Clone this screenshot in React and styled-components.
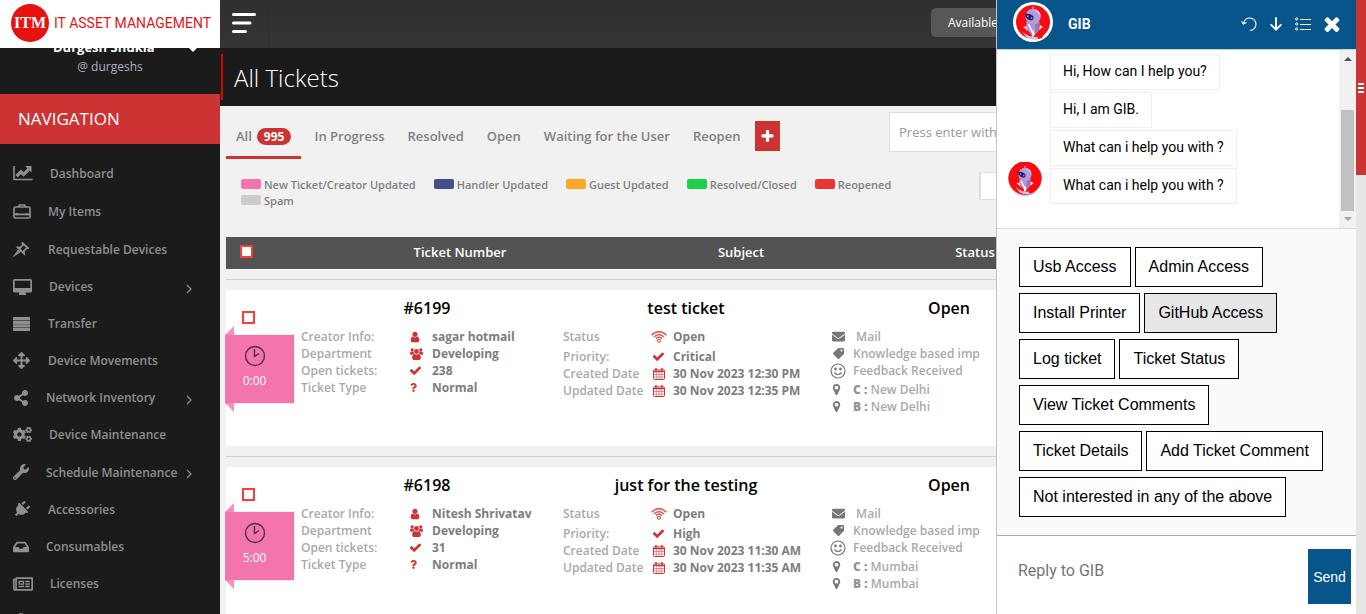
import React from 'react';
import styled, { createGlobalStyle, css } from 'styled-components';
import {
  FaArrowsAlt, FaShareAlt, FaCogs, FaWrench, FaPlug, FaInbox, FaRegNewspaper, FaUser,
  FaQuestion, FaEnvelope, FaTag,
} from 'react-icons/fa';

const Global = createGlobalStyle`
  *, *::before, *::after { box-sizing: border-box; }
  body { margin: 0; overflow: hidden; background: #f1f1f1; font-family: "Open Sans", sans-serif; font-size: 13px; }
  button, input { font: inherit; border-radius: 0; }
`;

/* ---------- icons ---------- */

const Glyph = ({ d, size = 14, box = '0 0 1792 1792' }) => (
  <svg width={size} height={size} viewBox={box} fill="currentColor" aria-hidden="true"><path d={d} /></svg>
);
const PERSON = 'M1536 1399q0 109-62.5 187t-150.5 78h-854q-88 0-150.5-78t-62.5-187q0-85 8.5-160.5t31.5-152 58.5-131 94-89 134.5-34.5q131 128 313 128t313-128q76 0 134.5 34.5t94 89 58.5 131 31.5 152 8.5 160.5zm-256-887q0 159-112.5 271.5t-271.5 112.5-271.5-112.5-112.5-271.5 112.5-271.5 271.5-112.5 271.5 112.5 112.5 271.5z';
const CHECK = 'M1671 566q0 40-28 68l-724 724-136 136q-28 28-68 28t-68-28l-136-136-362-362q-28-28-28-68t28-68l136-136q28-28 68-28t68 28l294 295 656-657q28-28 68-28t68 28l136 136q28 28 28 68z';
const MARKER = 'M1152 640q0-106-75-181t-181-75-181 75-75 181 75 181 181 75 181-75 75-181zm256 0q0 109-33 179l-364 774q-16 33-47.5 52t-67.5 19-67.5-19-46.5-52l-365-774q-33-70-33-179 0-212 150-362t362-150 362 150 150 362z';
const PLUS = 'M1600 736v192q0 40-28 68t-68 28h-416v416q0 40-28 68t-68 28h-192q-40 0-68-28t-28-68v-416h-416q-40 0-68-28t-28-68v-192q0-40 28-68t68-28h416v-416q0-40 28-68t68-28h192q40 0 68 28t28 68v416h416q40 0 68 28t28 68z';
const TIMES = 'M1490 1322q0 40-28 68l-136 136q-28 28-68 28t-68-28l-294-294-294 294q-28 28-68 28t-68-28l-136-136q-28-28-28-68t28-68l294-294-294-294q-28-28-28-68t28-68l136-136q28-28 68-28t68 28l294 294 294-294q28-28 68-28t68 28l136 136q28 28 28 68t-28 68l-294 294 294 294q28 28 28 68z';

const ChartIcon = () => (
  <svg width="20" height="16" viewBox="0 0 20 16" fill="none" stroke="currentColor" aria-hidden="true">
    <path d="M1 1v13.500h18.500" strokeWidth="1.600" />
    <path d="M3.600 11.200 8 6.800l2.700 2.700 5.300-5.300" strokeWidth="3.200" />
    <path d="M12 1h6.500v6.500z" fill="currentColor" stroke="none" />
  </svg>
);
const CaseIcon = () => (
  <svg width="18" height="15" viewBox="0 0 18 15" fill="none" stroke="currentColor" strokeWidth="1.700" aria-hidden="true">
    <rect x="1" y="3" width="16" height="11" rx="1.500" /><path d="M5.500 3 6.300 1h5.400l.8 2M1 10.300h16M4.200 9v2.600M13.800 9v2.600" />
  </svg>
);
const PinIcon = () => (
  <svg width="16" height="15" viewBox="0 0 16 15" aria-hidden="true">
    <path d="M.6 14.400 5.400 7.900l1.900 1.900z" fill="currentColor" stroke="currentColor" />
    <path d="M9.600 1.300 15 6l-1.700.5-2.400 2.600.2 2.500-6.400-6.100 2.800.1 2.300-2.600z" fill="none" stroke="currentColor" strokeWidth="1.800" />
  </svg>
);
const DesktopIcon = () => (
  <svg width="19" height="16" viewBox="0 0 19 16" fill="currentColor" aria-hidden="true">
    <path fillRule="evenodd" d="M1.600 0h15.800Q19 0 19 1.600V12q0 1.600-1.600 1.600H12.500l.5 1.500v.9H6v-.9l.5-1.500H1.600Q0 13.600 0 12V1.600Q0 0 1.600 0zM1.700 1.700v7.300h15.600V1.700z" />
  </svg>
);
const RowsIcon = () => (
  <svg width="17" height="14" viewBox="0 0 17 14" fill="currentColor" aria-hidden="true">
    <rect width="17" height="3.200" rx=".5" /><rect y="3.700" width="17" height="3.200" rx=".5" /><rect y="7.300" width="17" height="3.200" rx=".5" /><rect y="10.900" width="17" height="3.100" rx=".5" />
  </svg>
);
const GroupIcon = () => (
  <svg width="13" height="12" viewBox="0 0 13 12" fill="currentColor" aria-hidden="true">
    <circle cx="2.200" cy="1.800" r="1.600" /><circle cx="10.800" cy="1.800" r="1.600" /><circle cx="6.500" cy="3.500" r="2.400" />
    <path d="M0 5.500Q0 3.600 1.300 3.600h2.200q0 1.400 1 2.200-1.700 0-2.300 1H1Q0 6.800 0 5.500zM13 5.500q0-1.900-1.300-1.900H9.500q0 1.400-1 2.200 1.700 0 2.300 1H12q1 0 1-1.300z" />
    <path d="M2.200 10q0-3.800 2.300-3.900 2 1.400 4 0 2.300.1 2.300 3.900 0 2-1.600 2H3.800q-1.600 0-1.600-2z" />
  </svg>
);
const WifiIcon = () => (
  <svg width="16" height="13" viewBox="0 0 16 13" fill="none" stroke="currentColor" aria-hidden="true" opacity=".75">
    <path d="M.6 5.200Q8-1.800 15.400 5.200M3 7Q8 2.200 13 7M5 8.600Q8 5.800 11 8.600" strokeWidth="1.700" />
    <circle cx="8" cy="10.800" r="1.500" strokeWidth="1.200" />
  </svg>
);
const CalendarIcon = () => (
  <svg width="12" height="12" viewBox="0 0 12 12" fill="none" stroke="currentColor" aria-hidden="true">
    <rect x=".5" y="1.900" width="11" height="9.600" rx="1" />
    <path d="M.5 3.500h11" strokeWidth="1.400" /><path d="M3 0v2.500M9 0v2.500" strokeWidth="1.500" />
    <path d="M3.300 4v7M6 4v7M8.700 4v7M.5 6.500h11M.5 9h11" strokeWidth=".5" />
  </svg>
);
const SmileIcon = () => (
  <svg width="16" height="16" viewBox="0 0 16 16" fill="none" stroke="currentColor" strokeWidth="1.200" aria-hidden="true">
    <circle cx="8" cy="8" r="7" /><path d="M4.300 9.500q3.700 4 7.400 0" />
    <circle cx="5.500" cy="6" r=".8" fill="currentColor" /><circle cx="10.500" cy="6" r=".8" fill="currentColor" />
  </svg>
);
const ClockIcon = () => (
  <svg width="22" height="22" viewBox="0 0 22 22" fill="none" stroke="#4b3440" strokeWidth="1.400" aria-hidden="true">
    <circle cx="11" cy="11" r="9.500" /><path d="M10.500 4v7.500L15 8.500" />
  </svg>
);
const ChevronIcon = () => (
  <svg width="6" height="10" viewBox="0 0 6 10" fill="none" stroke="currentColor" strokeWidth="1.200" aria-hidden="true"><path d="m1 1 4 4-4 4" /></svg>
);
const MenuIcon = () => (
  <svg width="24" height="20" viewBox="0 0 24 20" stroke="#fff" strokeWidth="3" strokeLinecap="round" aria-hidden="true">
    <path d="M1.500 1.500h21M1.500 10h16.500M1.500 18.500h12" />
  </svg>
);
const UndoIcon = () => (
  <svg width="16" height="15" viewBox="0 0 16 15" fill="none" stroke="currentColor" strokeWidth="1.100" aria-hidden="true">
    <path d="M2.500 6.500C3.300 3 5.700 1 8.800 1c3.500 0 6.200 2.800 6.200 6.300s-2.700 6.200-6.200 6.200M.5 4.300l2 2.700 3-1.600" />
  </svg>
);
const DownIcon = () => (
  <svg width="12" height="14" viewBox="0 0 12 14" fill="none" stroke="currentColor" strokeWidth="1.900" strokeLinecap="round" aria-hidden="true">
    <path d="M6 1v11.500M1.200 7.800 6 12.600l4.800-4.800" />
  </svg>
);
const ListIcon = () => (
  <svg width="16" height="14" viewBox="0 0 16 14" fill="none" stroke="currentColor" aria-hidden="true">
    <circle cx="1.700" cy="2" r="1.100" /><circle cx="1.700" cy="7" r="1.100" /><circle cx="1.700" cy="12" r="1.100" />
    <path d="M5 2.500h11M5 7.500h11M5 12.500h11" />
  </svg>
);
const Robot = ({ size, ring }) => (
  <svg width={size} height={size} viewBox="0 0 40 40" role="img" aria-label="GIB">
    <circle cx="20" cy="20" r="20" fill={ring ? '#fff' : '#c9c9cf'} />
    <circle cx="20" cy={ring ? 20 : 19} r={ring ? 17 : 19.5} fill="#fb0a0e" />
    <path d="M9 30q11 8 21 3l-3 4q-7 2-13-1z" fill="#cfc6cf" />
    <path d="M24 33l7-2-2 5-4 1z" fill="#fb0a0e" />
    <path d="M20 4.500v5" stroke="#a8a0c8" strokeWidth="1.400" />
    <path d="M14 24l-4 1 5 4zM27 23l3 2-4 3z" fill="#e8e2f0" />
    <path d="M13.500 19.500h13v7.500q-3 5-6 6-5-2-7-7z" fill="#ab95d2" />
    <path d="M15.500 22q2 5 4.500 9" stroke="#efe8fa" strokeWidth="2" fill="none" />
    <path d="M22 22q4 0 4-2v7l-4 4z" fill="#8f79bb" />
    <circle cx="20" cy="14.500" r="7.800" fill="#b79ad9" />
    <path d="M20 8q7-1 7.500 6-3-5-7.500-6z" fill="#e2d2f4" />
    <path d="M12.300 11.500q4.500-.5 8 2.500 1 4-2 4.500-4-.5-6-4z" fill="#231a66" />
    <circle cx="14.800" cy="14.300" r="1" fill="#4aa8ff" /><circle cx="18.500" cy="16" r="1" fill="#4aa8ff" />
    <path d="M20 28l1.800 4.500-1.800 3-1.500-3z" fill="#fff" />
  </svg>
);

/* ---------- layout ---------- */

const Page = styled.div`
  display: grid;
  grid-template-columns: 220px 1fr 10px;
  height: 100vh;
  overflow: hidden;
`;

/* ---------- sidebar ---------- */

const Sidebar = styled.aside`
  background: #1b1b1b;
  overflow: hidden;
`;
const Logo = styled.a`
  display: flex;
  align-items: center;
  gap: 5px;
  height: 48px;
  padding: 0 0 2px 11px;
  background: #fff;
  color: #e31519;
  text-decoration: none;
  white-space: nowrap;
  font: 14px Roboto, sans-serif;
`;
const LogoMark = styled.span`
  flex: none;
  display: grid;
  place-items: center;
  width: 38px;
  height: 38px;
  border-radius: 50%;
  background: #e8120f;
  color: #fff;
  font: bold 16px "Liberation Serif", serif;
`;
const Profile = styled.div`
  display: flex;
  flex-direction: column;
  justify-content: flex-end;
  height: 46px;
  padding-bottom: 17px;
  overflow: hidden;
  line-height: 20px;
`;
const ProfileName = styled.div`
  display: flex;
  flex: none;
  align-items: center;
  justify-content: space-between;
  padding: 0 22px 0 53px;
  color: #fff;
  font-weight: 700;
`;
const Caret = styled.span`
  border: 5px solid transparent;
  border-top-color: #fff;
  border-bottom: 0;
  margin-top: 4px;
`;
const Handle = styled.div`
  text-align: center;
  color: #a9b3bd;
  font-size: 12px;
`;
const NavTitle = styled.h2`
  margin: 0;
  padding: 0 18px;
  background: #cc3333;
  color: #fff;
  font-size: 17px;
  font-weight: 400;
  line-height: 50px;
`;
const NavList = styled.ul`
  list-style: none;
  margin: 0;
  padding: 10px 0 0;
`;
const NavLink = styled.a`
  display: flex;
  align-items: center;
  height: ${(p) => (p.$tall ? 38 : 37)}px;
  padding: 0 28px 0 13px;
  color: #8f8f8f;
  font-size: 12px;
  font-weight: 600;
  text-decoration: none;
  white-space: nowrap;
`;
const NavIcon = styled.span`
  display: flex;
  flex: none;
  width: ${(p) => p.$w}px;
  margin-right: 17px;
  ${(p) => p.$turn && css`svg { transform: rotate(45deg); }`}
`;
const More = styled.span`
  display: flex;
  margin: 4px 0 0 auto;
`;

const nav = [
  { label: 'Dashboard', w: 20, icon: <ChartIcon />, tall: true },
  { label: 'My Items', w: 18, icon: <CaseIcon />, tall: true },
  { label: 'Requestable Devices', w: 18, icon: <PinIcon />, tall: true },
  { label: 'Devices', w: 19, icon: <DesktopIcon />, more: true },
  { label: 'Transfer', w: 18, icon: <RowsIcon /> },
  { label: 'Device Movements', w: 18, icon: <FaArrowsAlt size={17} /> },
  { label: 'Network Inventory', w: 16, icon: <FaShareAlt size={16} />, more: true },
  { label: 'Device Maintenance', w: 19, icon: <FaCogs size={19} /> },
  { label: 'Schedule Maintenance', w: 16, icon: <FaWrench size={16} />, more: true, tall: true },
  { label: 'Accessories', w: 18, icon: <FaPlug size={17} />, turn: true },
  { label: 'Consumables', w: 16, icon: <FaInbox size={16} /> },
  { label: 'Licenses', w: 20, icon: <FaRegNewspaper size={20} /> },
];

/* ---------- main ---------- */

const Main = styled.main`
  min-width: 0;
  overflow: hidden;
`;
const TopBar = styled.header`
  display: flex;
  align-items: center;
  height: 48px;
  background: linear-gradient(#2f2f2f, #353535);
`;
const MenuButton = styled.button`
  display: flex;
  align-items: center;
  height: 48px;
  width: 49px;
  padding: 0 0 2px 12px;
  border: 0;
  border-right: 1px solid #2e2e2e;
  background: none;
`;
const StatusButton = styled.button`
  margin: 0 315px 3px auto;
  width: 110px;
  height: 29px;
  padding: 0 17px;
  border: 0;
  border-radius: 5px;
  background: #575757;
  color: #fff;
  font-size: 12px;
  text-align: left;
`;
const TitleBand = styled.div`
  padding: 6px 1px;
  background: #1a1a1a;
`;
const Title = styled.h1`
  margin: 0;
  padding: 2px 0 0 11px;
  border-left: 2px solid #cc0c0c;
  color: #fff;
  font-size: 24px;
  font-weight: 300;
  line-height: 44px;
`;
const Content = styled.section`
  padding: 0 10px 0 6px;
`;
const TabBar = styled.div`
  display: flex;
  align-items: flex-start;
  height: 59px;
  padding-top: 6px;
`;
const Tabs = styled.nav`
  display: flex;
  gap: 3px;
`;
const Tab = styled.a`
  display: flex;
  align-items: center;
  gap: 5px;
  height: 47px;
  padding: 4px 10px 0;
  border-bottom: 3px solid ${(p) => (p.$on ? '#cc3333' : 'transparent')};
  color: #808080;
  font-weight: 600;
  text-decoration: none;
  white-space: nowrap;
`;
const Count = styled.span`
  padding: 0 7px;
  border-radius: 9px;
  background: #cc3333;
  color: #fff;
  font-size: 12px;
  font-weight: 700;
  line-height: 17px;
`;
const AddButton = styled.button`
  display: grid;
  place-items: center;
  width: 25px;
  height: 30px;
  margin: 9px 0 0 5px;
  padding: 0;
  border: 0;
  background: #cc3333;
  color: #fff;
`;
const Search = styled.input`
  width: 300px;
  height: 40px;
  margin: 0 157px 0 auto;
  padding: 0 9px;
  border: 1px solid #dcdcdc;
  background: #fff;
  outline: 0;
  &::placeholder { color: #999; opacity: 1; }
`;
const Toolbar = styled.div`
  display: flex;
  justify-content: space-between;
  height: 72px;
  padding: 7px 157px 0 15px;
`;
const Legend = styled.ul`
  display: flex;
  flex-wrap: wrap;
  align-content: flex-start;
  gap: 0 18px;
  width: 680px;
  margin: 0;
  padding: 5px 0 0;
  list-style: none;
  color: #808080;
  font-size: 11px;
  font-weight: 600;
  line-height: 16px;
`;
const LegendItem = styled.li`
  display: flex;
  gap: 3px;
  &::before {
    content: "";
    width: 20px;
    height: 10px;
    margin-top: 2px;
    border-radius: 2px;
    background: ${(p) => p.$color};
  }
`;
const Filter = styled.input`
  width: 210px;
  height: 28px;
  border: 1px solid #ddd;
  border-left-width: 2px;
  background: #fff;
`;

const Table = styled.table`
  width: 100%;
  table-layout: fixed;
  border-collapse: collapse;
`;
const Col = styled.col`
  width: ${(p) => (p.$w ? `${p.$w}px` : 'auto')};
`;
const Th = styled.th`
  height: 32px;
  padding: 0 0 2px ${(p) => p.$shift || 0}px;
  border-bottom: 1px solid #fff;
  background: #535353;
  color: #fff;
  font-weight: 600;
  text-align: ${(p) => p.$align || 'center'};
`;
const Tick = styled.input`
  appearance: none;
  display: block;
  width: 13px;
  height: 13px;
  margin: 0;
  border: 2px solid #fb3d3d;
  background: #fff;
`;
const Gap = styled.td`
  height: 21px;
  padding: 0;
`;
const Rule = styled.hr`
  margin: 0;
  border: 0;
  border-top: 1px solid #d0d0d0;
`;
const Cell = styled.td`
  height: 156px;
  padding: 0 0 0 ${(p) => p.$inset || 0}px;
  background: #fff;
  vertical-align: top;
`;
const TickCell = styled(Cell)`
  padding: 21px 0 0;
`;
const TickWrap = styled.div`
  padding-left: 16px;
`;
const Ribbon = styled.div`
  position: relative;
  display: flex;
  flex-direction: column;
  align-items: center;
  gap: 5px;
  width: 70px;
  height: 70px;
  margin: 10px 0 0 -1px;
  padding: 10px 10px 0 0;
  border: 1px solid #eee;
  border-left: 0;
  background: #f474ac;
  color: #fff;
  font-size: 12px;
  line-height: 18px;
  &::before, &::after {
    content: "";
    position: absolute;
    left: 0;
    width: 9px;
    height: 9px;
    background: #fb8dbf;
  }
  &::before { top: -9px; clip-path: polygon(100% 0, 100% 100%, 0 100%); }
  &::after { bottom: -9px; clip-path: polygon(0 0, 100% 0, 100% 100%); }
`;
const CardTitle = styled.div`
  margin-left: -${(p) => p.$inset}px;
  padding-bottom: 2px;
  color: #000;
  font-size: 16px;
  font-weight: 600;
  line-height: 36px;
  text-align: center;
`;
const Fields = styled.dl`
  display: grid;
  grid-template-columns: ${(p) => p.$label}px 1fr;
  margin: 0;
  font-size: 12px;
  line-height: 17px;
  white-space: nowrap;
  & > dt { color: #a9a9a9; font-weight: 600; }
  & > dd { display: flex; align-items: center; margin: 0; color: #7d7d7d; font-weight: 700; }
  ${(p) => p.$loose && css`& > :nth-child(-n + 2) { margin-bottom: 3px; }`}
`;
const FieldIcon = styled.span`
  display: flex;
  flex: none;
  width: ${(p) => (p.$narrow ? 22 : 23)}px;
  color: ${(p) => p.$color || '#cc3333'};
  svg { margin-left: ${(p) => p.$pad || 0}px; }
`;
const Notes = styled.ul`
  list-style: none;
  margin: 0;
  padding: 0;
  color: #a9a9a9;
  font-size: 12px;
  font-weight: 600;
  line-height: 17px;
  white-space: nowrap;
  li { display: flex; align-items: center; }
  li:nth-child(3) { margin-bottom: 2px; }
  b { color: #949494; }
`;
const FlippedTag = styled(FaTag)`
  transform: scaleX(-1);
`;

const legend = [
  ['New Ticket/Creator Updated', '#f474ac'], ['Handler Updated', '#43508b'], ['Guest Updated', '#ffa726'],
  ['Resolved/Closed', '#1fcf49'], ['Reopened', '#eb3434'], ['Spam', '#cbcbcb'],
];
const tickets = [
  { id: '#6199', subject: 'test ticket', time: '0:00', creator: 'sagar hotmail', open: '238', priority: 'Critical', created: '30 Nov 2023 12:30 PM', updated: '30 Nov 2023 12:35 PM', city: 'New Delhi' },
  { id: '#6198', subject: 'just for the testing', time: '5:00', creator: 'Nitesh Shrivatav', open: '31', priority: 'High', created: '30 Nov 2023 11:30 AM', updated: '30 Nov 2023 11:35 AM', city: 'Mumbai' },
];

const Field = ({ label, icon, narrow, pad, children }) => (
  <>
    <dt>{label}</dt>
    <dd><FieldIcon $narrow={narrow} $pad={pad}>{icon}</FieldIcon>{children}</dd>
  </>
);
const Note = ({ icon, pad, children }) => (
  <li><FieldIcon $color="#777" $pad={pad}>{icon}</FieldIcon><span>{children}</span></li>
);

const Ticket = ({ t }) => (
  <tbody>
    <tr><Gap colSpan={5}><Rule /></Gap></tr>
    <tr>
      <TickCell>
        <TickWrap><Tick type="checkbox" aria-label={`Select ticket ${t.id}`} /></TickWrap>
        <Ribbon><ClockIcon />{t.time}</Ribbon>
      </TickCell>
      <Cell $inset={5}>
        <CardTitle $inset={5}>{t.id}</CardTitle>
        <Fields $label={108}>
          <Field label="Creator Info:" icon={<Glyph d={PERSON} size={12} />}>{t.creator}</Field>
          <Field label="Department" pad={1} icon={<GroupIcon />}>Developing</Field>
          <Field label="Open tickets:" icon={<Glyph d={CHECK} size={13} />}>{t.open}</Field>
          <Field label="Ticket Type" icon={<FaQuestion size={9} />}>Normal</Field>
        </Fields>
      </Cell>
      <Cell $inset={5}>
        <CardTitle $inset={5}>{t.subject}</CardTitle>
        <Fields $label={88} $loose>
          <Field label="Status" narrow icon={<WifiIcon />}>Open</Field>
          <Field label="Priority:" narrow pad={1} icon={<Glyph d={CHECK} size={13} />}>{t.priority}</Field>
          <Field label="Created Date" narrow pad={2} icon={<CalendarIcon />}>{t.created}</Field>
          <Field label="Updated Date" narrow pad={2} icon={<CalendarIcon />}>{t.updated}</Field>
        </Fields>
      </Cell>
      <Cell $inset={16}>
        <CardTitle $inset={16}>Open</CardTitle>
        <Notes>
          <Note pad={2} icon={<FaEnvelope size={13} />}>&nbsp;Mail</Note>
          <Note pad={3} icon={<FlippedTag size={11} />}>Knowledge based imp</Note>
          <Note icon={<SmileIcon />}>Feedback Received</Note>
          <Note icon={<Glyph d={MARKER} size={13} />}><b>C :</b> {t.city}</Note>
          <Note icon={<Glyph d={MARKER} size={13} />}><b>B :</b> {t.city}</Note>
        </Notes>
      </Cell>
      <Cell />
    </tr>
  </tbody>
);

/* ---------- page scrollbar ---------- */

const PageRail = styled.div`
  background: #e6e6e6;
`;
const PageThumb = styled.div`
  display: flex;
  flex-direction: column;
  align-items: center;
  justify-content: center;
  gap: 2px;
  height: 175px;
  background: #cc3333;
`;
const Grip = styled.span`
  width: 6px;
  height: 2px;
  background: #fff;
`;

/* ---------- chat ---------- */

const Chat = styled.aside`
  position: fixed;
  top: 0;
  right: 10px;
  bottom: 0;
  display: flex;
  flex-direction: column;
  width: 360px;
  border-left: 1px solid #c4c4c4;
  background: #fff;
`;
const ChatHeader = styled.header`
  display: flex;
  flex: none;
  align-items: center;
  height: 50px;
  padding: 0 16px 5px;
  border-bottom: 1px solid #c8d0d6;
  background: #07558b;
  color: #fff;
`;
const ChatName = styled.h2`
  flex: 1;
  margin: 4px 0 0 15px;
  font: bold 14px Roboto, sans-serif;
`;
const ChatTools = styled.div`
  display: flex;
  gap: 13px;
  margin-top: 4px;
`;
const Tool = styled.button`
  display: grid;
  place-items: center;
  padding: 0;
  border: 0;
  background: none;
  color: #fff;
`;
const Log = styled.div`
  display: flex;
  flex: 1;
  min-height: 0;
`;
const LogBody = styled.div`
  display: flex;
  flex: 1;
  align-items: flex-end;
  gap: 8px;
  padding: 0 11px 24px;
  overflow: hidden;
  & > svg { flex: none; margin-bottom: 8px; }
`;
const Bubbles = styled.div`
  display: flex;
  flex-direction: column;
  align-items: flex-start;
  gap: 2px;
`;
const Bubble = styled.p`
  margin: 0;
  padding: 0 12px 2px;
  border: 1px solid #efefef;
  color: #000;
  font: 14px/32px Roboto, sans-serif;
`;
const LogRail = styled.div`
  display: flex;
  flex-direction: column;
  align-items: center;
  width: 17px;
  padding: 7px 0;
  background: #f1f1f1;
`;
const RailArrow = styled.span`
  border: 4px solid transparent;
  ${(p) => (p.$up
    ? css`border-top: 0; border-bottom-color: #505050; margin-bottom: auto;`
    : css`border-bottom: 0; border-top-color: #a3a3a3; margin-top: 6px;`)}
`;
const RailThumb = styled.span`
  width: 13px;
  height: 101px;
  background: #c1c1c1;
`;
const Options = styled.div`
  display: flex;
  flex: none;
  flex-wrap: wrap;
  gap: 6px 4px;
  padding: 18px 26px 18px 22px;
  border-top: 1px solid #dadada;
  background: #fafafa;
`;
const Option = styled.button`
  height: 40px;
  padding: 0 13px;
  border: 1px solid #000;
  background: ${(p) => (p.$hover ? '#e7e7e7' : '#fff')};
  color: #000;
  font: 16px "Liberation Sans", Arial, sans-serif;
`;
const Composer = styled.form`
  display: flex;
  flex: none;
  align-items: center;
  height: 79px;
  padding: 3px 5px 0 21px;
  border-top: 1px solid #aaa;
`;
const Reply = styled.input`
  flex: 1;
  min-width: 0;
  height: 40px;
  margin-bottom: 13px;
  padding: 0;
  border: 0;
  outline: 0;
  font: 16px Roboto, sans-serif;
  &::placeholder { color: #757575; opacity: 1; }
`;
const Send = styled.button`
  width: 43px;
  height: 55px;
  padding: 0;
  border: 0;
  background: #07558b;
  color: #fff;
  font: 14px "Liberation Sans", Arial, sans-serif;
`;

const messages = ['Hi, How can I help you?', 'Hi, I am GIB.', 'What can i help you with ?', 'What can i help you with ?'];
const options = ['Usb Access', 'Admin Access', 'Install Printer', 'GitHub Access', 'Log ticket', 'Ticket Status',
  'View Ticket Comments', 'Ticket Details', 'Add Ticket Comment', 'Not interested in any of the above'];

export default function App() {
  return (
    <Page>
      <Global />
      <Sidebar>
        <Logo href="#"><LogoMark>ITM</LogoMark>IT ASSET MANAGEMENT</Logo>
        <Profile>
          <ProfileName>Durgesh Shukla<Caret /></ProfileName>
          <Handle>@ durgeshs</Handle>
        </Profile>
        <NavTitle>NAVIGATION</NavTitle>
        <NavList>
          {nav.map((n) => (
            <li key={n.label}>
              <NavLink href="#" $tall={n.tall}>
                <NavIcon $w={n.w} $turn={n.turn}>{n.icon}</NavIcon>
                {n.label}
                {n.more && <More><ChevronIcon /></More>}
              </NavLink>
            </li>
          ))}
          <li>
            <NavLink href="#" aria-label="Account"><NavIcon $w={16}><FaUser size={16} /></NavIcon></NavLink>
          </li>
        </NavList>
      </Sidebar>

      <Main>
        <TopBar>
          <MenuButton aria-label="Toggle menu"><MenuIcon /></MenuButton>
          <StatusButton>Available</StatusButton>
        </TopBar>
        <TitleBand><Title>All Tickets</Title></TitleBand>
        <Content>
          <TabBar>
            <Tabs>
              <Tab href="#" $on>All <Count>995</Count></Tab>
              {['In Progress', 'Resolved', 'Open', 'Waiting for the User', 'Reopen'].map((t) => <Tab href="#" key={t}>{t}</Tab>)}
            </Tabs>
            <AddButton aria-label="Add tab"><Glyph d={PLUS} size={15} /></AddButton>
            <Search aria-label="Search tickets" placeholder="Press enter with" />
          </TabBar>
          <Toolbar>
            <Legend>{legend.map(([l, c]) => <LegendItem key={l} $color={c}>{l}</LegendItem>)}</Legend>
            <Filter aria-label="Filter" />
          </Toolbar>
          <Table>
            <colgroup><Col $w={70} /><Col $w={262} /><Col $w={256} /><Col $w={270} /><Col /></colgroup>
            <thead>
              <tr>
                <Th $shift={14} $align="left"><Tick type="checkbox" aria-label="Select all tickets" /></Th>
                <Th $shift={66}>Ticket Number</Th>
                <Th $shift={110}>Subject</Th>
                <Th $shift={52}>Status</Th>
                <Th />
              </tr>
            </thead>
            {tickets.map((t) => <Ticket key={t.id} t={t} />)}
          </Table>
        </Content>
      </Main>

      <PageRail><PageThumb><Grip /><Grip /><Grip /></PageThumb></PageRail>

      <Chat>
        <ChatHeader>
          <Robot size={40} ring />
          <ChatName>GIB</ChatName>
          <ChatTools>
            <Tool aria-label="Restart"><UndoIcon /></Tool>
            <Tool aria-label="Scroll down"><DownIcon /></Tool>
            <Tool aria-label="Menu"><ListIcon /></Tool>
            <Tool aria-label="Close"><Glyph d={TIMES} size={16} box="260 276 1272 1272" /></Tool>
          </ChatTools>
        </ChatHeader>
        <Log>
          <LogBody>
            <Robot size={34} />
            <Bubbles>{messages.map((m, i) => <Bubble key={i}>{m}</Bubble>)}</Bubbles>
          </LogBody>
          <LogRail><RailArrow $up /><RailThumb /><RailArrow /></LogRail>
        </Log>
        <Options>{options.map((o) => <Option key={o} $hover={o === 'GitHub Access'}>{o}</Option>)}</Options>
        <Composer>
          <Reply aria-label="Reply to GIB" placeholder="Reply to GIB" />
          <Send type="button">Send</Send>
        </Composer>
      </Chat>
    </Page>
  );
}
